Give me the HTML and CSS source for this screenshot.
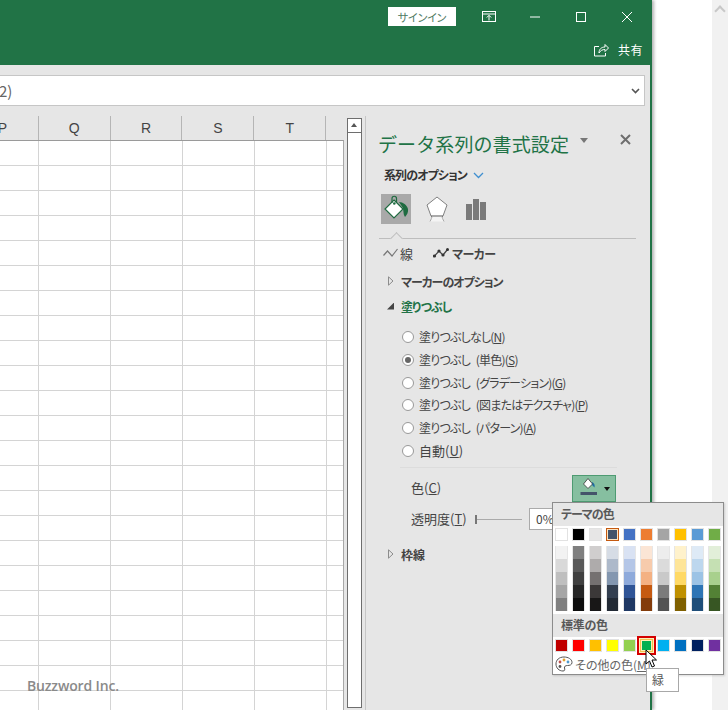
FILE: index.html
```html
<!DOCTYPE html>
<html lang="ja">
<head>
    <meta charset="UTF-8">
    <title>データ系列の書式設定</title>
    <link rel="stylesheet" href="styles.css">
</head>
<body>
    <div class="window">
        <header class="titlebar">
            <div class="title-row">
                <button class="signin">サインイン</button>
                <span class="win-btn">
                    <svg width="14" height="12" viewBox="0 0 14 12" fill="none" stroke="#fff"><rect x="0.5" y="0.5" width="13" height="10"/><path d="M0.5 3h13M7 9.5V4.5M4.8 6.5L7 4.3l2.2 2.2"/></svg>
                </span>
                <span class="win-btn">
                    <svg width="12" height="12" viewBox="0 0 12 12" stroke="#fff"><path d="M1 6h10"/></svg>
                </span>
                <span class="win-btn">
                    <svg width="12" height="12" viewBox="0 0 12 12" fill="none" stroke="#fff"><rect x="1.5" y="1.5" width="9" height="9"/></svg>
                </span>
                <span class="win-btn">
                    <svg width="12" height="12" viewBox="0 0 12 12" stroke="#fff"><path d="M1 1l10 10M11 1L1 11"/></svg>
                </span>
            </div>
            <div class="share-row">
                <svg width="15" height="15" viewBox="0 0 15 15" fill="none" stroke="#fff"><path d="M5 4.5H.5v9.5h11v-3"/><path d="M5 11c0-4 2.500-6 6-6V2.500l3.500 3.500-3.500 3.500V7.500c-2.500 0-4.500 1-6 3.500z"/></svg>
                <span class="share-label">共有</span>
            </div>
        </header>

        <div class="formula-row">
            <div class="formula-box">
                <span class="formula-text">2)</span>
                <svg class="formula-arrow" width="9" height="6" viewBox="0 0 9 6" fill="none" stroke="#555" stroke-width="1.600"><path d="M1 1l3.500 3.500L8 1"/></svg>
            </div>
        </div>

        <div class="workspace">
            <div class="sheet">
                <div class="col-heads">
                    <span class="col-head">P</span>
                    <span class="col-head">Q</span>
                    <span class="col-head">R</span>
                    <span class="col-head">S</span>
                    <span class="col-head">T</span>
                    <span class="col-head col-last"></span>
                </div>
                <div class="cells"></div>
            </div>

            <div class="scrollbar">
                <div class="scroll-up"></div>
                <div class="scroll-thumb"></div>
            </div>

            <aside class="pane">
                <div class="pane-title">
                    <h2>データ系列の書式設定</h2>
                    <span class="title-caret"></span>
                    <svg class="pane-close" width="11" height="11" viewBox="0 0 11 11" stroke="#6e6e6e" stroke-width="2"><path d="M1 1l9 9M10 1l-9 9"/></svg>
                </div>

                <div class="pane-sub">
                    <span>系列のオプション</span>
                    <svg class="sub-chevron" width="11" height="7" viewBox="0 0 11 7" fill="none" stroke="#3f8fd0" stroke-width="1.300"><path d="M1 1l4.500 4.500L10 1"/></svg>
                </div>

                <div class="icon-tabs">
                    <span class="icon-tab active">
                        <svg width="30" height="30" viewBox="0 0 30 30">
                            <path d="M18 8c4 0 8 3 9 7 .5 3-1 6-3 8-1-1.500-1.500-3-1.500-4.500L22 14z" fill="#1f6b41"/>
                            <path d="M13 6L22 15 13 24 4 15z" fill="#fff" stroke="#1f6b41" stroke-width="1.200"/>
                            <path d="M11 9V4.500c0-3 4.500-3 4.500 0V9" fill="none" stroke="#1f6b41" stroke-width="1.200"/>
                            <circle cx="13.300" cy="9.500" r="1.300" fill="#1f6b41"/>
                        </svg>
                    </span>
                    <span class="icon-tab">
                        <svg width="22" height="26" viewBox="0 0 22 26">
                            <path d="M11 1l10 8-4 11H5L1 9z" fill="#fff" stroke="#808080"/>
                            <path d="M5 20.500h12" stroke="#666" stroke-width="1.500"/>
                            <path d="M4 25.500c1-2 2-4 2-5h10c0 1 1 3 2 5" fill="#f4f4f4" stroke="#aaa"/>
                        </svg>
                    </span>
                    <span class="icon-tab tab-bars">
                        <svg width="20" height="21" viewBox="0 0 20 21" fill="#7a7a7a"><rect x="0" y="5" width="6" height="16"/><rect x="7" y="0" width="6" height="21"/><rect x="14" y="3" width="6" height="18"/></svg>
                    </span>
                </div>

                <div class="tab-rule"></div>

                <div class="sub-tabs">
                    <svg width="15" height="10" viewBox="0 0 15 10" fill="none" stroke="#777" stroke-width="1.200"><path d="M0.500 7.500L4.500 3l4.500 5 5.500-7"/></svg>
                    <span class="sub-tab">線</span>
                    <svg class="marker-icon" width="16" height="10" viewBox="0 0 16 10" fill="none" stroke="#444" stroke-width="1.200"><path d="M1.500 8L6 3l4 4 4.500-5.500"/><g fill="#333" stroke="none"><circle cx="1.500" cy="8" r="1.600"/><circle cx="6" cy="3" r="1.600"/><circle cx="10" cy="7" r="1.600"/><circle cx="14.500" cy="1.500" r="1.500"/></g></svg>
                    <span class="sub-tab strong">マーカー</span>
                </div>

                <div class="section-head head-marker">
                    <svg class="tri-open" width="6" height="10" viewBox="0 0 6 10" fill="none" stroke="#8c8c8c"><path d="M.5 .8L5 5 .5 9.200z"/></svg>
                    <span class="tight">マーカーのオプション</span>
                </div>
                <div class="section-head head-fill">
                    <span class="tri-filled"></span>
                    <span class="green tight">塗りつぶし</span>
                </div>

                <ul class="radios">
                    <li><span class="radio"></span><span class="radio-text">塗りつぶしなし(<u>N</u>)</span></li>
                    <li><span class="radio checked"></span><span class="radio-text">塗りつぶし (単色)(<u>S</u>)</span></li>
                    <li><span class="radio"></span><span class="radio-text">塗りつぶし (グラデーション)(<u>G</u>)</span></li>
                    <li><span class="radio"></span><span class="radio-text">塗りつぶし (図またはテクスチャ)(<u>P</u>)</span></li>
                    <li><span class="radio"></span><span class="radio-text">塗りつぶし (パターン)(<u>A</u>)</span></li>
                    <li><span class="radio"></span><span class="radio-text kanji">自動(<u>U</u>)</span></li>
                </ul>

                <div class="fill-rule"></div>

                <div class="field color-field">
                    <label>色(<u>C</u>)</label>
                    <span class="color-btn">
                        <svg class="bucket" width="18" height="18" viewBox="0 0 18 18">
                            <path d="M12 5c2.500 1 3 3 2.500 5.500L12 8z" fill="#1c6ea4"/>
                            <path d="M8 1.500L3.500 7 8 11.500 12.500 7z" fill="#fff" stroke="#333" stroke-width=".8"/>
                            <rect x="0.500" y="15" width="16.500" height="3" fill="#44546a"/>
                        </svg>
                        <span class="btn-caret"></span>
                    </span>
                </div>

                <div class="field alpha-field">
                    <label>透明度(<u>T</u>)</label>
                    <span class="slider"></span>
                    <span class="alpha-input">0%</span>
                </div>

                <div class="section-head head-border">
                    <svg class="tri-open" width="6" height="10" viewBox="0 0 6 10" fill="none" stroke="#8c8c8c"><path d="M.5 .8L5 5 .5 9.200z"/></svg>
                    <span>枠線</span>
                </div>
            </aside>
        </div>
    </div>

    <div class="gutter"></div>
    <div class="page-scroll"><span class="page-scroll-up"></span></div>

    <div class="palette">
        <div class="palette-head head-theme">テーマの色</div>
        <div class="swatch-row" id="theme-row"></div>
        <div class="tint-grid" id="tint-grid"></div>
        <div class="palette-head head-standard">標準の色</div>
        <div class="swatch-row" id="standard-row"></div>
        <div class="palette-more">
            <svg width="18" height="16" viewBox="0 0 18 16"><path d="M9 1C4 1 1 4 1 8s3 7 7 7c2 0 2-1.500 1.500-3-.5-1.500 1-2.500 3-2.500s4.500-.5 4.500-3C17 3 13 1 9 1z" fill="#fff" stroke="#555"/><circle cx="5" cy="6" r="1.400" fill="#c0504d"/><circle cx="9" cy="4" r="1.400" fill="#e0a030"/><circle cx="13" cy="6" r="1.400" fill="#4f9bd0"/><circle cx="5" cy="10.500" r="1.400" fill="#555"/></svg>
            <span>その他の色(<u>M</u>)...</span>
        </div>
    </div>

    <div class="tooltip">緑</div>

    <svg class="cursor" width="13" height="20" viewBox="0 0 13 20"><path d="M1 1v14l3.500-3 2.500 6 2.500-1-2.500-6h4.500z" fill="#fff" stroke="#000"/></svg>

    <div class="watermark">Buzzword Inc.</div>

    <script src="script.js"></script>
</body>
</html>
```

FILE: styles.css
```css
* {
    box-sizing: border-box;
}

body {
    font-family: "Noto Sans CJK JP", "Noto Sans", sans-serif;
    font-feature-settings: "palt";
    font-size: 12px;
    color: #444;
    background-color: #fff;
    margin: 0;
    height: 710px;
    overflow: hidden;
    display: flex;
}

.window {
    width: 652px;
    height: 710px;
    background-color: #e6e6e6;
    border-right: 2px solid #217346;
    box-shadow: 2px 0 3px rgba(0, 0, 0, 0.3);
}

.gutter {
    flex: 1;
}

.page-scroll {
    width: 16px;
    background-color: #f1f1f1;
    padding: 4px 3px;
}

.page-scroll-up {
    display: block;
    width: 8px;
    height: 8px;
    margin: 3px auto 0;
    border-left: 2px solid #c8c8c8;
    border-top: 2px solid #c8c8c8;
    transform: rotate(45deg);
}

/* title bar */
.titlebar {
    height: 65px;
    background-color: #217346;
}

.title-row {
    height: 33px;
    display: flex;
    justify-content: flex-end;
    align-items: center;
}

.signin {
    width: 68px;
    height: 19px;
    margin-right: 10px;
    padding: 0;
    border: none;
    background-color: #fff;
    color: #4f7a63;
    font: inherit;
    font-size: 11px;
    letter-spacing: -0.2px;
}

.win-btn {
    width: 46px;
    display: flex;
    justify-content: center;
}

.share-row {
    height: 32px;
    padding-right: 7px;
    display: flex;
    justify-content: flex-end;
    align-items: center;
    gap: 9px;
    color: #fff;
}

.share-label {
    font-size: 12px;
    letter-spacing: 0.5px;
}

/* formula bar */
.formula-row {
    padding: 10px 5px 0 0;
}

.formula-box {
    height: 31px;
    background-color: #fff;
    border: 1px solid #c6c6c6;
    border-left: none;
    display: flex;
    justify-content: space-between;
    align-items: center;
    padding-right: 4px;
}

.formula-text {
    font-size: 15px;
    color: #666;
    margin-left: -1px;
}

/* sheet */
.workspace {
    display: flex;
    margin-top: 10px;
}

.sheet {
    width: 344px;
    height: 594px;
    overflow: hidden;
}

.col-heads {
    height: 24px;
    margin-left: -33px;
    display: flex;
}

.col-head {
    width: 72px;
    border-right: 1px solid #b5b5b5;
    text-align: center;
    line-height: 24px;
    font-family: "Liberation Sans", sans-serif;
    font-size: 14px;
    color: #444;
}

.col-last {
    width: 18px;
    border-right: none;
}

.cells {
    height: 570px;
    background-color: #fff;
    border-top: 1px solid #9a9a9a;
    border-right: 1px solid #a8a8a8;
    background-image:
        linear-gradient(to right, #d4d4d4 1px, transparent 1px),
        linear-gradient(to bottom, #d4d4d4 1px, transparent 1px);
    background-size: 72px 25px;
    background-position: 38px 24px;
}

.scrollbar {
    width: 15px;
    height: 590px;
    margin: 2px 0 0 3px;
    display: flex;
    flex-direction: column;
}

.scroll-up {
    height: 15px;
    background-color: #fff;
    border: 1px solid #6e6e6e;
    position: relative;
}

.scroll-up::before {
    content: "";
    position: absolute;
    left: 3px;
    top: 4px;
    border-left: 3.5px solid transparent;
    border-right: 3.5px solid transparent;
    border-bottom: 4px solid #555;
}

.scroll-thumb {
    flex: 1;
    background-color: #fff;
    border: 1px solid #6e6e6e;
    border-top: none;
}

/* format pane */
.pane {
    flex: 1;
    height: 594px;
    margin-left: 3px;
    padding: 14px 0 0 13px;
    border-left: 1px solid #c6c6c6;
}

.pane-title {
    height: 28px;
    padding-bottom: 2px;
    display: flex;
    align-items: center;
}

.pane-title h2 {
    margin: 0 0 0 -1px;
    font-size: 19px;
    font-weight: 400;
    font-feature-settings: normal;
    letter-spacing: 0.1px;
    color: #217346;
    white-space: nowrap;
}

.title-caret {
    margin: -6px 0 0 11px;
    border-left: 4.5px solid transparent;
    border-right: 4.5px solid transparent;
    border-top: 5px solid #777;
}

.pane-close {
    margin: -7px 0 0 32px;
}

.pane-sub {
    height: 20px;
    margin: 7px 0 0 5px;
    padding-bottom: 2px;
    display: flex;
    align-items: center;
    gap: 6px;
    font-weight: 700;
    color: #333;
    letter-spacing: -0.9px;
}

.sub-chevron {
    margin-top: 2px;
}

.icon-tabs {
    height: 30px;
    margin: 9px 0 0 2px;
    display: flex;
    align-items: center;
    gap: 15px;
}

.icon-tab {
    height: 30px;
    display: flex;
    align-items: center;
}

.icon-tab.active {
    width: 30px;
    background-color: #a9a9a9;
}

.tab-bars {
    margin-left: 3px;
}

.tab-rule {
    height: 1px;
    width: 257px;
    margin-top: 14px;
    background-color: #bdbdbd;
    position: relative;
}

.tab-rule::before {
    content: "";
    position: absolute;
    left: 13px;
    top: -4px;
    width: 8px;
    height: 8px;
    background-color: #e6e6e6;
    border-left: 1px solid #bdbdbd;
    border-top: 1px solid #bdbdbd;
    transform: rotate(45deg);
}

.sub-tabs {
    height: 18px;
    margin: 6px 0 0 4px;
    padding-bottom: 2px;
    display: flex;
    align-items: center;
}

.sub-tab {
    margin-left: 2px;
    font-size: 13px;
}

.sub-tab.strong {
    font-weight: 700;
    font-size: 12px;
    margin-left: 3px;
    letter-spacing: -0.5px;
}

.marker-icon {
    margin-left: 20px;
}

.section-head {
    height: 20px;
    padding-bottom: 2px;
    display: flex;
    align-items: center;
    gap: 7px;
    margin-left: 9px;
    font-weight: 700;
}

.tight {
    letter-spacing: -1px;
}

.head-marker {
    margin-top: 9px;
}

.head-fill {
    margin-top: 5px;
}

.head-border {
    margin-top: 14px;
}

.green {
    color: #217346;
}

.tri-filled {
    width: 7px;
    height: 7px;
    margin-left: -1px;
    background-color: #444;
    clip-path: polygon(100% 0, 100% 100%, 0 100%);
}

.radios {
    list-style: none;
    margin: 8.6px 0 0 23px;
    padding: 0;
}

.radios li {
    height: 22.8px;
    display: flex;
    align-items: center;
    gap: 5px;
    white-space: nowrap;
}

.radio {
    width: 12px;
    height: 12px;
    background-color: #fff;
    border: 1px solid #999;
    border-radius: 50%;
    position: relative;
}

.radio.checked::before {
    content: "";
    position: absolute;
    left: 2px;
    top: 2px;
    width: 6px;
    height: 6px;
    border-radius: 50%;
    background-color: #666;
}

.radio-text {
    margin-top: -1px;
    letter-spacing: -0.8px;
    word-spacing: 4px;
}

.radio-text.kanji {
    font-size: 13px;
    letter-spacing: 0;
}

.fill-rule {
    width: 217px;
    height: 1px;
    margin: 5px 0 0 21px;
    background-color: #dcdcdc;
}

.field {
    display: flex;
    align-items: center;
    margin-left: 32px;
}

.field label {
    margin-top: -2px;
    font-size: 13px;
}

.color-field {
    height: 27px;
    margin-top: 7px;
}

.color-field label {
    width: 161px;
}

.color-btn {
    width: 44px;
    height: 27px;
    background-color: #86bfa0;
    border: 1px solid #4e9b72;
    display: flex;
    align-items: center;
    padding-left: 7px;
    gap: 6px;
}

.bucket {
    margin-top: -5px;
}

.btn-caret {
    border-left: 3.5px solid transparent;
    border-right: 3.5px solid transparent;
    border-top: 4px solid #111;
}

.alpha-field {
    height: 24px;
    margin-top: 5px;
}

.alpha-field label {
    width: 64px;
}

.slider {
    width: 47px;
    height: 1px;
    background-color: #aaa;
    position: relative;
}

.slider::before {
    content: "";
    position: absolute;
    left: 0;
    top: -4px;
    width: 2px;
    height: 9px;
    background-color: #777;
}

.alpha-input {
    width: 50px;
    height: 22px;
    margin-left: 7px;
    padding-left: 6px;
    line-height: 20px;
    background-color: #fff;
    border: 1px solid #aaa;
}

/* colour palette popup */
.palette {
    position: absolute;
    left: 552px;
    top: 502px;
    width: 172px;
    height: 173px;
    background-color: #fff;
    border: 1px solid #8c8c8c;
    box-shadow: 1px 1px 2px rgba(0, 0, 0, 0.15);
}

.palette-head {
    height: 23px;
    padding-left: 8px;
    line-height: 21px;
    background-color: #e6e6e6;
    color: #595959;
    font-weight: 700;
}

.head-theme {
    letter-spacing: -1px;
}

.head-standard {
    margin-top: 3px;
    letter-spacing: -0.3px;
}

.swatch-row,
.tint-grid {
    display: flex;
    gap: 4px;
    padding-left: 2px;
    margin-top: 2px;
}

.tint-grid {
    margin-top: 5px;
}

.swatch {
    width: 13px;
    height: 13px;
    border: 1px solid #e2e2e2;
}

.swatch.picked-theme {
    border-color: #c55a11;
    box-shadow: inset 0 0 0 1px #fde4c0;
}

.swatch.picked-standard {
    border-color: #f2c14e;
    box-shadow: inset 0 0 0 1px #fdf0b8, 0 0 0 1px #fdf0b8, 0 0 0 3px #d40000;
}

.tint-col {
    width: 13px;
    border: 1px solid #e6e6e6;
    border-width: 0 1px;
}

.tint {
    height: 13px;
}

.palette-more {
    height: 20px;
    margin-top: 2px;
    padding-left: 2px;
    display: flex;
    align-items: center;
    gap: 2px;
    color: #666;
}

.tooltip {
    position: absolute;
    left: 646px;
    top: 668px;
    width: 33px;
    height: 24px;
    padding-left: 5px;
    line-height: 22px;
    background-color: #fff;
    border: 1px solid #a8a8a8;
    color: #555;
}

.cursor {
    position: absolute;
    left: 645px;
    top: 649px;
}

.watermark {
    position: absolute;
    left: 27px;
    top: 676px;
    font-family: "Open Sans", sans-serif;
    font-feature-settings: normal;
    font-size: 14px;
    font-weight: 600;
    letter-spacing: -0.15px;
    color: #8a8a8a;
}
```

FILE: script.js
```js
const themeColors = ['#ffffff', '#000000', '#e7e6e6', '#44546a', '#4472c4', '#ed7d31', '#a5a5a5', '#ffc000', '#5b9bd5', '#70ad47'];
const standardColors = ['#c00000', '#ff0000', '#ffc000', '#ffff00', '#92d050', '#00b050', '#00b0f0', '#0070c0', '#002060', '#7030a0'];
const tints = [
    ['#f2f2f2', '#d9d9d9', '#bfbfbf', '#a6a6a6', '#808080'],
    ['#7f7f7f', '#595959', '#404040', '#262626', '#0d0d0d'],
    ['#d0cece', '#aeabab', '#757171', '#3b3838', '#181717'],
    ['#d6dce5', '#adb9ca', '#8497b0', '#333f50', '#222a35'],
    ['#d9e2f3', '#b4c6e7', '#8eaadb', '#2f5496', '#1f3864'],
    ['#fbe5d5', '#f7cbac', '#f4b183', '#c55a11', '#833c0b'],
    ['#ededed', '#dbdbdb', '#c9c9c9', '#7b7b7b', '#525252'],
    ['#fff2cc', '#fee599', '#ffd965', '#bf9000', '#7f6000'],
    ['#deeaf6', '#bdd7ee', '#9cc3e5', '#2e75b5', '#1f4e79'],
    ['#e2efd9', '#c5e0b3', '#a8d08d', '#538135', '#375623']
];

function renderSwatches(rowId, colors, pickedIndex, pickedClass) {
    const row = document.getElementById(rowId);
    colors.forEach((color, index) => {
        const swatch = document.createElement('span');
        swatch.className = 'swatch';
        if (index === pickedIndex) {
            swatch.classList.add(pickedClass);
        }
        swatch.style.backgroundColor = color;
        row.appendChild(swatch);
    });
}

function renderTints() {
    const grid = document.getElementById('tint-grid');
    tints.forEach(column => {
        const col = document.createElement('div');
        col.className = 'tint-col';
        column.forEach(color => {
            const tint = document.createElement('div');
            tint.className = 'tint';
            tint.style.backgroundColor = color;
            col.appendChild(tint);
        });
        grid.appendChild(col);
    });
}

renderSwatches('theme-row', themeColors, 3, 'picked-theme');
renderTints();
renderSwatches('standard-row', standardColors, 5, 'picked-standard');
```
